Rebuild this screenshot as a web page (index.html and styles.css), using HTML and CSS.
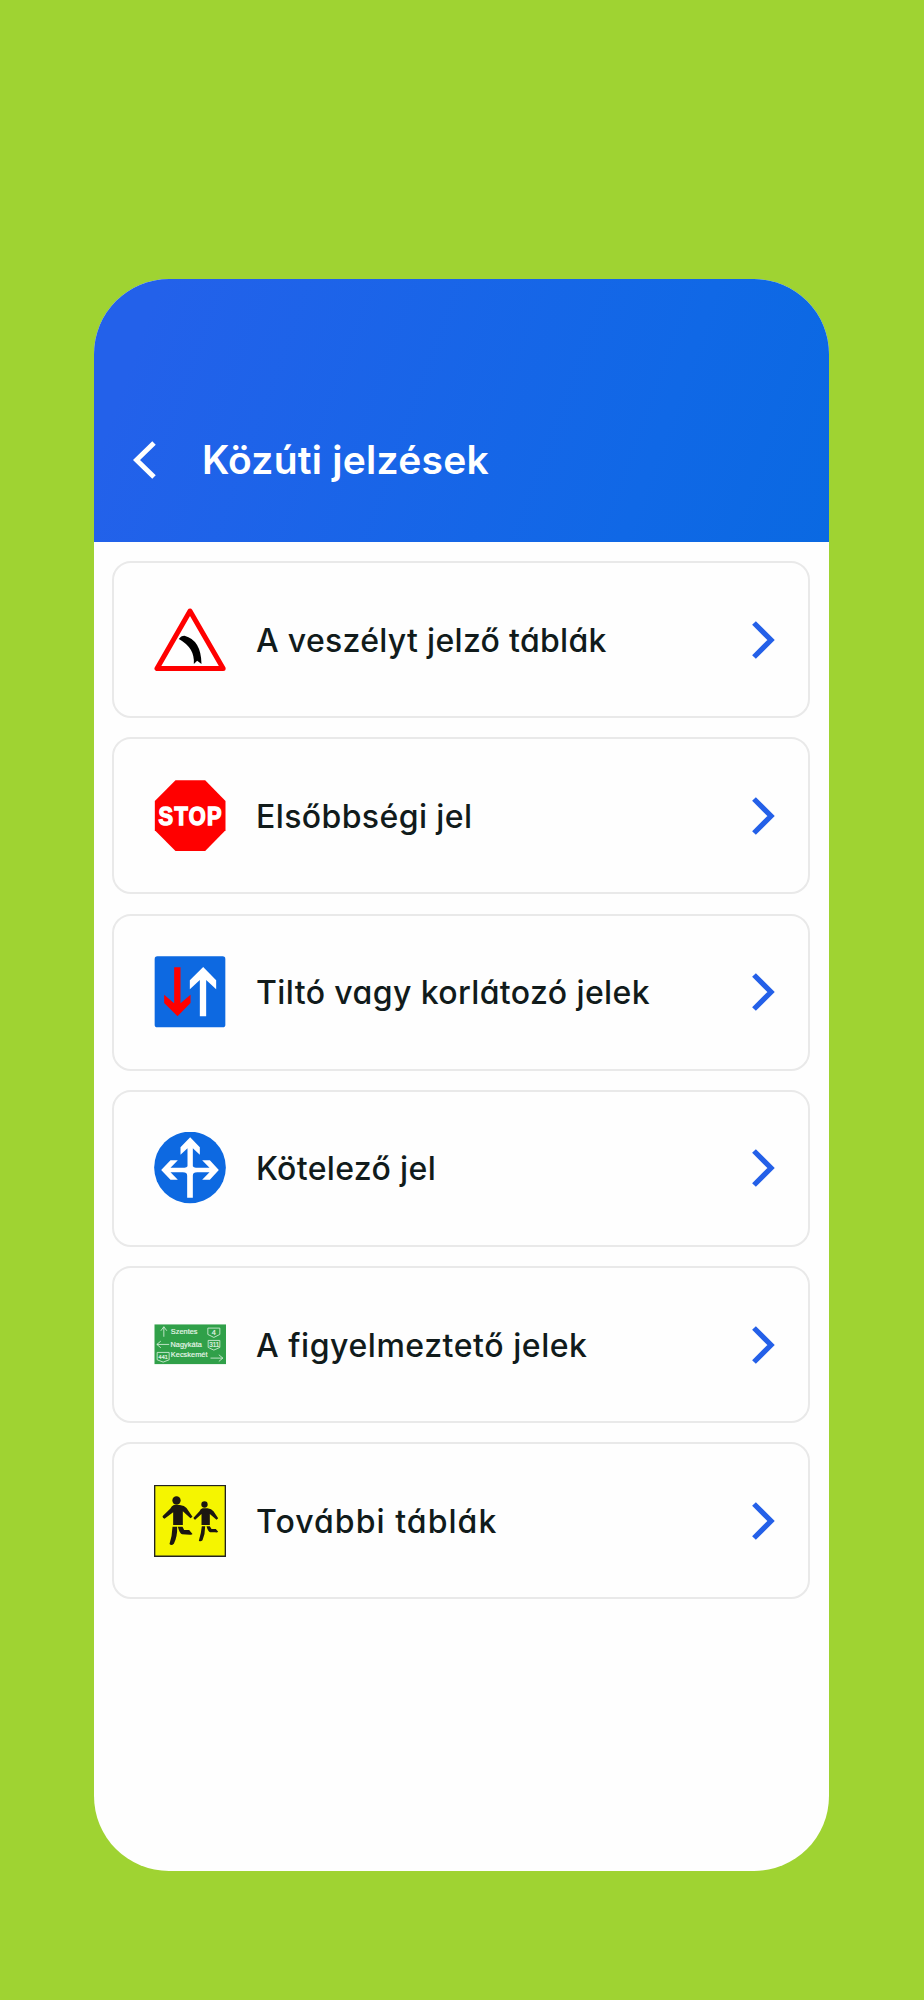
FILE: index.html
```html
<!DOCTYPE html>
<html lang="hu">
<head>
<meta charset="utf-8">
<title>Közúti jelzések</title>
<link rel="stylesheet" href="styles.css">
</head>
<body>
<main class="phone">
  <header class="header">
    <svg class="back" viewBox="0 0 24 38"><path d="M21 2 3.500 19 21 36"/></svg>
    <h1 class="title">Közúti jelzések</h1>
  </header>
  <ul class="list">
    <li class="card">
      <svg class="sign" viewBox="163.500 161 216 216">
        <path d="M271.500 182 172.500 354.500H371Z" fill="#fff" stroke="#f00" stroke-width="15" stroke-linejoin="round"/>
        <path d="M238 266Q244 256 255 256Q305 269 306 341L293 331 283 341Q287 293 238 266Z" fill="#000"/>
      </svg>
      <span class="label l1">A veszélyt jelző táblák</span>
      <svg class="chevron" viewBox="0 0 24 38"><path d="M3 2 20 19 3 36"/></svg>
    </li>
    <li class="card">
      <svg class="sign" viewBox="73.500 60 216 216">
        <path d="M138 61H227L288 123V211L227 273H138L76 211V123Z" fill="#f00"/>
        <text class="stop" transform="translate(87 195) scale(.86 1)" x="0" y="0" textLength="220">STOP</text>
      </svg>
      <span class="label l2">Elsőbbségi jel</span>
      <svg class="chevron" viewBox="0 0 24 38"><path d="M3 2 20 19 3 36"/></svg>
    </li>
    <li class="card">
      <svg class="sign" viewBox="73.500 49 216 216">
        <rect x="75.500" y="50" width="212" height="213" rx="8" fill="#0d69e1"/>
        <path d="M134 83H153V191L183 165V190L144 230 104 190V165L134 191Z" fill="#f00"/>
        <path d="M211 230V121L181 149V122L221 82 260 122V149L230 121V230Z" fill="#fff"/>
      </svg>
      <span class="label l3">Tiltó vagy korlátozó jelek</span>
      <svg class="chevron" viewBox="0 0 24 38"><path d="M3 2 20 19 3 36"/></svg>
    </li>
    <li class="card">
      <svg class="sign" viewBox="73.500 53 216 216">
        <circle cx="181.500" cy="159.500" r="107.500" fill="#0d69e1"/>
        <path d="M182 69 211 99V121L190 102V156Q192 160 199 160H240L218 138H241L268 167 241 196H218L240 174H203Q190 174 190 184V250H173V184Q173 174 160 174H123L145 196H123L95 167 123 138H145L123 160H165Q172 160 174 156V102L153 121V99Z" fill="#fff"/>
      </svg>
      <span class="label l4">Kötelező jel</span>
      <svg class="chevron" viewBox="0 0 24 38"><path d="M3 2 20 19 3 36"/></svg>
    </li>
    <li class="card">
      <svg class="sign" viewBox="73.500 26.700 216 216">
        <rect x="75" y="73" width="215" height="119" fill="#30a049"/>
        <g fill="none" stroke="#d8efdc" stroke-width="2.500">
          <path d="M103 110V80M94 92 103 80 112 92M119 133H82M94 123 82 133 94 143M243 174H280M268 164 280 174 268 184"/>
          <path d="M235 84H271V103L253 112 235 103ZM236 121H271V142L253 150 236 142ZM83 157H119V179L101 186 83 179Z"/>
        </g>
        <g class="road">
          <text x="124" y="101" textLength="80">Szentes</text>
          <text x="123" y="141" textLength="94">Nagykáta</text>
          <text x="124" y="172" textLength="110">Kecskemét</text>
          <text x="247" y="104" textLength="12">4</text>
          <text x="239" y="142" textLength="30" lengthAdjust="spacingAndGlyphs">311</text>
          <text class="small" x="87" y="176" textLength="28">441</text>
        </g>
      </svg>
      <span class="label l5">A figyelmeztető jelek</span>
      <svg class="chevron" viewBox="0 0 24 38"><path d="M3 2 20 19 3 36"/></svg>
    </li>
    <li class="card">
      <svg class="sign" viewBox="73.500 59 216 216">
        <rect x="75" y="60" width="213" height="213" fill="#f5f500" stroke="#222" stroke-width="5"/>
        <g fill="#1b1611">
          <circle cx="141" cy="105.500" r="12.500"/>
          <path d="M133 119H151Q165 121 171 128L189 154 183 159 160 138V179H131V141L105 160Q99 159 99 153L122 130Q127 121 133 119Z"/>
          <path d="M129 184H143Q144 214 133 235Q126 242 120 236Q128 211 129 184ZM145 184H159L164 194H179L189 206Q187 209 181 208L158 207Q151 206 145 184Z"/>
          <circle cx="225" cy="117.500" r="9.500"/>
          <path d="M219 129H234Q246 131 252 138L266 159 261 163 241 146V179H216V146L197 163Q192 162 192 157L210 138Q213 130 219 129Z"/>
          <path d="M217 183H227Q227 207 219 225Q213 230 208 226Q215 205 217 183ZM231 183H241L246 191H259L266 199Q264 202 257 201H242Q236 200 231 183Z"/>
        </g>
      </svg>
      <span class="label l6">További táblák</span>
      <svg class="chevron" viewBox="0 0 24 38"><path d="M3 2 20 19 3 36"/></svg>
    </li>
  </ul>
</main>
</body>
</html>
```

FILE: styles.css
```css
* { box-sizing: border-box; }
body {
  margin: 0;
  min-height: 2000px;
  padding: 279px 95px 129px 94.400px;
  background: #9fd332;
  font-family: Inter, "Noto Sans", sans-serif;
  font-feature-settings: "cv11";
}
.phone {
  height: 1592px;
  border-radius: 75px;
  overflow: hidden;
  background: #fefefe;
}
.header {
  height: 263px;
  padding: 162px 0 0 39px;
  display: flex;
  align-items: flex-start;
  gap: 44.500px;
  background: linear-gradient(110deg, #2361ea 8%, #1068e6 75%, #0a69e2 100%);
}
.back, .chevron {
  width: 24px;
  height: 38px;
  flex: none;
  fill: none;
  stroke: #fff;
  stroke-width: 5;
}
.title {
  margin: -5px 0 0;
  font-size: 39px;
  line-height: 48px;
  font-weight: 630;
  letter-spacing: .25px;
  color: #fff;
  white-space: nowrap;
}
.list {
  list-style: none;
  margin: 0;
  padding: 19px 19px 0 17.600px;
  display: flex;
  flex-direction: column;
  gap: 19.300px;
}
.card {
  height: 157px;
  padding: 0 33px 0 40px;
  display: flex;
  align-items: center;
  border: 2px solid #e9e9e9;
  border-radius: 19px;
}
.sign { width: 72px; height: 72px; flex: none; }
.label {
  flex: 1;
  padding: 2px 0 0 30px;
  font-size: 32px;
  line-height: 40px;
  font-weight: 500;
  color: #111b1b;
  white-space: nowrap;
}
.l1 { letter-spacing: .3px; }
.l2 { letter-spacing: .4px; }
.l3 { letter-spacing: .4px; }
.l4 { letter-spacing: .35px; }
.l5 { letter-spacing: .55px; }
.l6 { letter-spacing: 1.05px; }
.chevron { stroke: #2460e8; stroke-width: 5.300; }
.stop { font: bold 76px "Liberation Sans", sans-serif; fill: #fff; stroke: #fff; stroke-width: 4.500; }
.road { font: 22px "Liberation Sans", sans-serif; fill: #e9f7eb; stroke: #e9f7eb; stroke-width: .5; }
.road .small { font-size: 16px; }
```
